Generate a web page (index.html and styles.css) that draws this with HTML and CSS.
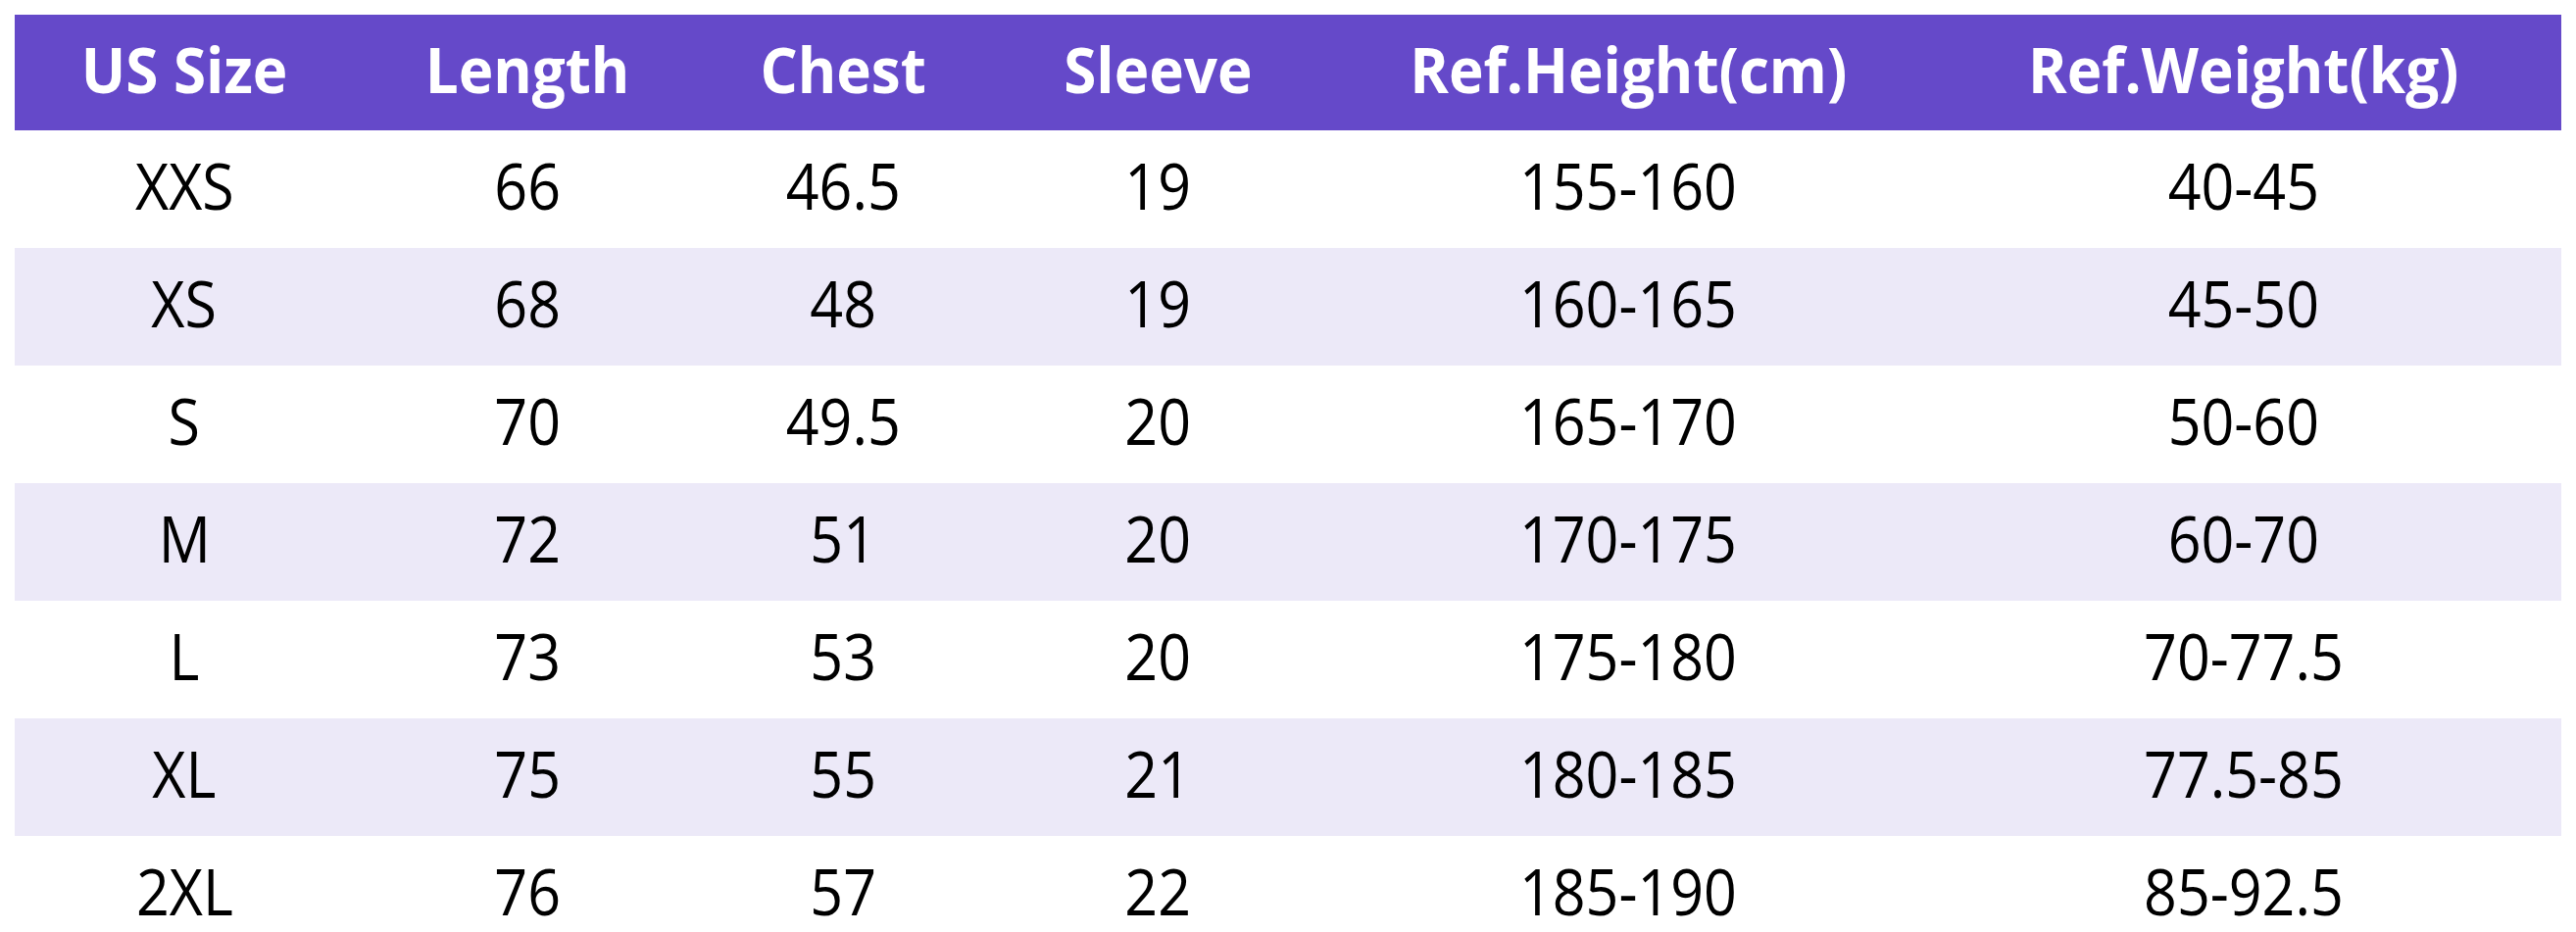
FILE: index.html
```html
<!DOCTYPE html>
<html lang="en">
<head>
<meta charset="utf-8">
<title>Size Chart</title>
<link rel="stylesheet" href="styles.css">
</head>
<body>
<div class="chart">
  <div class="row head">
    <div class="cell"><span>US Size</span></div>
    <div class="cell"><span>Length</span></div>
    <div class="cell"><span>Chest</span></div>
    <div class="cell"><span>Sleeve</span></div>
    <div class="cell"><span>Ref.Height(cm)</span></div>
    <div class="cell"><span>Ref.Weight(kg)</span></div>
  </div>
  <div class="row">
    <div class="cell"><span>XXS</span></div>
    <div class="cell"><span>66</span></div>
    <div class="cell"><span>46.5</span></div>
    <div class="cell"><span>19</span></div>
    <div class="cell"><span>155-160</span></div>
    <div class="cell"><span>40-45</span></div>
  </div>
  <div class="row alt">
    <div class="cell"><span>XS</span></div>
    <div class="cell"><span>68</span></div>
    <div class="cell"><span>48</span></div>
    <div class="cell"><span>19</span></div>
    <div class="cell"><span>160-165</span></div>
    <div class="cell"><span>45-50</span></div>
  </div>
  <div class="row">
    <div class="cell"><span>S</span></div>
    <div class="cell"><span>70</span></div>
    <div class="cell"><span>49.5</span></div>
    <div class="cell"><span>20</span></div>
    <div class="cell"><span>165-170</span></div>
    <div class="cell"><span>50-60</span></div>
  </div>
  <div class="row alt">
    <div class="cell"><span>M</span></div>
    <div class="cell"><span>72</span></div>
    <div class="cell"><span>51</span></div>
    <div class="cell"><span>20</span></div>
    <div class="cell"><span>170-175</span></div>
    <div class="cell"><span>60-70</span></div>
  </div>
  <div class="row">
    <div class="cell"><span>L</span></div>
    <div class="cell"><span>73</span></div>
    <div class="cell"><span>53</span></div>
    <div class="cell"><span>20</span></div>
    <div class="cell"><span>175-180</span></div>
    <div class="cell"><span>70-77.5</span></div>
  </div>
  <div class="row alt">
    <div class="cell"><span>XL</span></div>
    <div class="cell"><span>75</span></div>
    <div class="cell"><span>55</span></div>
    <div class="cell"><span>21</span></div>
    <div class="cell"><span>180-185</span></div>
    <div class="cell"><span>77.5-85</span></div>
  </div>
  <div class="row">
    <div class="cell"><span>2XL</span></div>
    <div class="cell"><span>76</span></div>
    <div class="cell"><span>57</span></div>
    <div class="cell"><span>22</span></div>
    <div class="cell"><span>185-190</span></div>
    <div class="cell"><span>85-92.5</span></div>
  </div>
</div>
</body>
</html>
```

FILE: styles.css
```css
html, body {
  margin: 0;
  overflow: hidden;
  background: #ffffff;
}

body {
  padding: 15px 15px 0;
  font-family: "Open Sans", "Noto Sans", "Liberation Sans", sans-serif;
  color: #000000;
}

.chart {
  width: 2598px;
}

.row {
  display: grid;
  grid-template-columns: 346px 354px 290px 352px 608px 648px;
  height: 120px;
  background: #ffffff;
}

.row.alt {
  background: #ece9f8;
}

.row.head {
  height: 118px;
  background: #6549c9;
  color: #ffffff;
  font-weight: 700;
}

.cell {
  display: flex;
  align-items: center;
  justify-content: center;
  padding-bottom: 7px;
  box-sizing: border-box;
  font-size: 65px;
  line-height: 1;
  white-space: nowrap;
}

.head .cell {
  font-size: 64px;
}

.cell span {
  display: inline-block;
  transform: scaleX(0.91);
}

.head .cell span {
  transform: scaleX(0.94);
}
```
